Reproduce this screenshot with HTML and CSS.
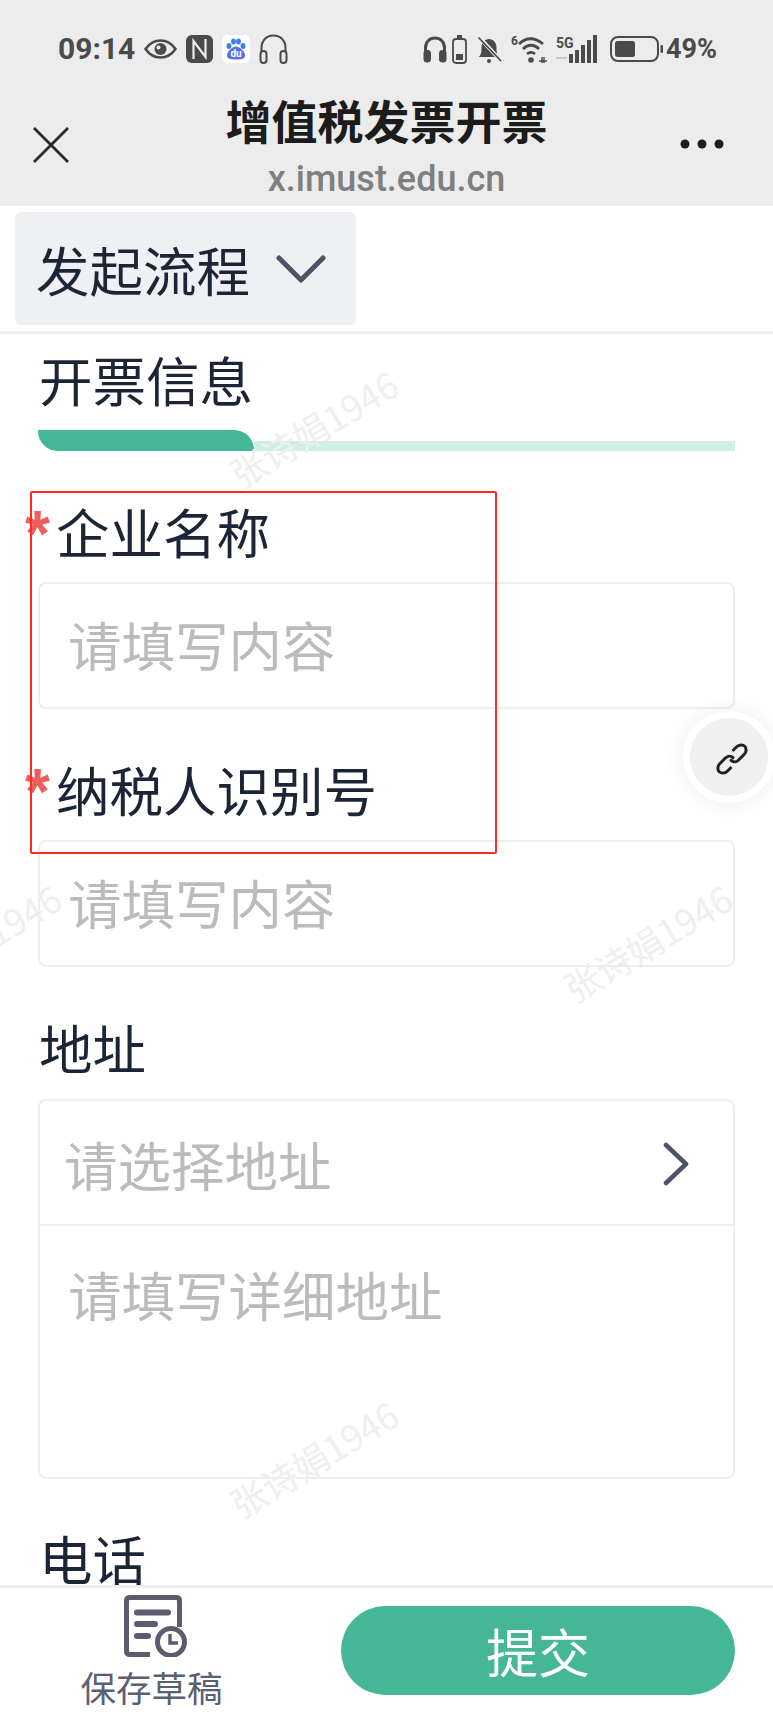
FILE: index.html
```html
<!DOCTYPE html>
<html lang="zh-CN">
<head>
<meta charset="utf-8">
<title>增值税发票开票</title>
<link rel="stylesheet" href="styles.css">
</head>
<body>
<div class="app">
  <header class="topbar">
    <div class="status">
      <div class="status-group">
        <span class="time">09:14</span>
        <svg class="i-eye" viewBox="0 0 33 20"><path d="M1.5 10C6 3.5 11 1.5 16.5 1.5S27 3.5 31.5 10C27 16.5 22 18.5 16.5 18.5S6 16.5 1.5 10Z" fill="none" stroke="#4a4a4a" stroke-width="2.6"/><circle cx="16.5" cy="10" r="6" fill="#4a4a4a"/><circle cx="14.5" cy="8.5" r="2" fill="#ececec"/></svg>
        <svg class="i-nfc" viewBox="0 0 27 28"><rect width="27" height="28" rx="6" fill="#4a4a4a"/><path d="M7.500 24V6L19.500 22V4" fill="none" stroke="#ececec" stroke-width="2.200"/></svg>
        <svg class="i-baidu" viewBox="0 0 28 28"><rect width="28" height="28" rx="5" fill="#fff"/><ellipse cx="7" cy="11" rx="2.4" ry="3" fill="#3a7df0"/><ellipse cx="11.5" cy="6.5" rx="2.4" ry="3" fill="#3a7df0"/><ellipse cx="16.5" cy="6.5" rx="2.4" ry="3" fill="#3a7df0"/><ellipse cx="21" cy="11" rx="2.4" ry="3" fill="#3a7df0"/><path d="M14 11.5C18 11.5 23 17 23 20.5S19.500 24.500 14 24.500 5 24 5 20.500 10 11.500 14 11.500Z" fill="#5b6cf0"/><text class="du" x="14" y="22" text-anchor="middle">du</text></svg>
        <svg class="i-phones" viewBox="0 0 29 30"><path d="M2.500 18V14C2.500 6.500 7.500 1.500 14.500 1.500S26.500 6.500 26.500 14V18" fill="none" stroke="#4a4a4a" stroke-width="2"/><rect x="1.500" y="17" width="6" height="12" rx="3" fill="none" stroke="#4a4a4a" stroke-width="2"/><rect x="21.500" y="17" width="6" height="12" rx="3" fill="none" stroke="#4a4a4a" stroke-width="2"/></svg>
      </div>
      <div class="status-group status-right">
        <svg class="i-phones-fill" viewBox="0 0 24 27"><path d="M2.500 17V12C2.500 6 6.500 2 12 2S21.500 6 21.500 12V17" fill="none" stroke="#4a4a4a" stroke-width="3"/><rect x="0.500" y="14" width="7.500" height="12.500" rx="3.500" fill="#4a4a4a"/><rect x="16" y="14" width="7.500" height="12.500" rx="3.500" fill="#4a4a4a"/></svg>
        <svg class="i-batt-v" viewBox="0 0 15 29"><rect x="5" y="0" width="5" height="3" fill="#4a4a4a"/><rect x="1" y="4" width="13" height="24" rx="3" fill="none" stroke="#4a4a4a" stroke-width="1.800"/><rect x="4" y="19" width="7" height="6" fill="#4a4a4a"/></svg>
        <svg class="i-bell" viewBox="0 0 25 27"><path d="M2 21C4.500 18 4.500 15 4.500 11.500 4.500 6.500 8 3 12 3S19.500 6.500 19.500 11.500C19.500 15 19.500 18 22 21Z" fill="#4a4a4a"/><circle cx="12" cy="25" r="2" fill="#4a4a4a"/><path d="M2.500 1.500L24 25" stroke="#ececec" stroke-width="4"/><path d="M1.500 1.500L24 25" stroke="#4a4a4a" stroke-width="1.800"/></svg>
        <svg class="i-wifi" viewBox="0 0 37 30"><text class="six" x="0" y="11">6</text><path d="M8 10C15 3 24 3 32 10M12 15C17 10 23 10 28 15M16 20C18.500 18 21.500 18 24 20" fill="none" stroke="#4a4a4a" stroke-width="2.800"/><circle cx="20" cy="26" r="2.800" fill="#4a4a4a"/><path d="M28 27H36M31 23V29M33 23V29" stroke="#4a4a4a" stroke-width="1.400"/></svg>
        <svg class="i-signal" viewBox="0 0 44 29"><text class="fiveg" x="0" y="13">5G</text><path d="M0 23H11" stroke="#bdbdbd" stroke-width="1.500"/><rect x="13" y="19" width="4" height="9" fill="#4a4a4a"/><rect x="19" y="15" width="4" height="13" fill="#4a4a4a"/><rect x="25" y="10" width="4" height="18" fill="#4a4a4a"/><rect x="31" y="5" width="4" height="23" fill="#4a4a4a"/><rect x="37" y="0" width="4" height="28" fill="#4a4a4a"/></svg>
        <svg class="i-batt" viewBox="0 0 53 26"><rect x="1" y="1" width="47" height="24" rx="7" fill="none" stroke="#4a4a4a" stroke-width="2"/><rect x="5" y="5" width="20" height="16" rx="2.500" fill="#4a4a4a"/><rect x="50.500" y="9" width="2.500" height="8" rx="1" fill="#4a4a4a"/></svg>
        <span class="percent">49%</span>
      </div>
    </div>
    <div class="nav">
      <svg class="i-close" viewBox="0 0 36 36"><path d="M1 1L35 35M35 1L1 35" stroke="#2a2a2a" stroke-width="2.800"/></svg>
      <div class="nav-title">
        <div class="title">增值税发票开票</div>
        <div class="url">x.imust.edu.cn</div>
      </div>
      <svg class="i-more" viewBox="0 0 44 10"><circle cx="5" cy="5" r="4.500" fill="#1c1c1c"/><circle cx="22" cy="5" r="4.500" fill="#1c1c1c"/><circle cx="39" cy="5" r="4.500" fill="#1c1c1c"/></svg>
    </div>
  </header>

  <div class="toolbar">
    <div class="flow-btn">
      <span>发起流程</span>
      <svg class="i-chev-down" viewBox="0 0 50 28"><path d="M3 3L25 25L47 3" fill="none" stroke="#4b5565" stroke-width="5" stroke-linecap="round" stroke-linejoin="round"/></svg>
    </div>
  </div>

  <main class="form">
    <h2 class="section-title">开票信息</h2>
    <div class="progress"><div class="progress-fill"></div><div class="progress-rest"></div></div>

    <div class="field field-first">
      <div class="label label-req"><span class="star">*</span>企业名称</div>
      <div class="input"><span class="placeholder">请填写内容</span></div>
    </div>
    <div class="field">
      <div class="label label-req"><span class="star">*</span>纳税人识别号</div>
      <div class="input"><span class="placeholder">请填写内容</span></div>
    </div>
    <div class="field">
      <div class="label">地址</div>
      <div class="address">
        <div class="address-row">
          <span class="placeholder">请选择地址</span>
          <svg class="i-chev-right" viewBox="0 0 26 44"><path d="M3 3L23 22L3 41" fill="none" stroke="#4b5565" stroke-width="4.500" stroke-linecap="round" stroke-linejoin="round"/></svg>
        </div>
        <div class="address-detail"><span class="placeholder">请填写详细地址</span></div>
      </div>
    </div>
    <div class="field field-phone">
      <div class="label">电话</div>
    </div>
  </main>

  <footer class="footer">
    <div class="draft">
      <svg class="i-draft" viewBox="0 0 64 62"><path d="M26 59.500H6Q2.500 59.500 2.500 56V5.500Q2.500 2.500 6 2.500H52Q55.500 2.500 55.500 5.500V32" fill="none" stroke="#5b5d6e" stroke-width="5"/><path d="M13 17.500H44M13 29H31M13 41H24" stroke="#5b5d6e" stroke-width="6" stroke-linecap="round"/><circle cx="47" cy="47" r="13.500" fill="#fff" stroke="#5b5d6e" stroke-width="5"/><path d="M46 39V48H54" fill="none" stroke="#5b5d6e" stroke-width="3.500"/></svg>
      <span class="draft-text">保存草稿</span>
    </div>
    <button class="submit">提交</button>
  </footer>

  <span class="wm wm-1">张诗娟1946</span>
  <span class="wm wm-2">张诗娟1946</span>
  <span class="wm wm-3">张诗娟1946</span>
  <span class="wm wm-4">张诗娟1946</span>

  <div class="red-box"></div>
  <div class="float-link">
    <svg class="i-link" viewBox="0 0 36 36"><path d="M19.500 8.500L23 5C25.500 2.500 29.500 2.500 31.500 4.500S33.500 10.500 31 13L25 19C22.500 21.500 19 21.500 17 19.500" fill="none" stroke="#222" stroke-width="3.200" stroke-linecap="round"/><path d="M16.500 27.500L13 31C10.500 33.500 6.500 33.500 4.500 31.500S2.500 25.500 5 23L11 17C13.500 14.500 17 14.500 19 16.500" fill="none" stroke="#222" stroke-width="3.200" stroke-linecap="round"/></svg>
  </div>
</div>
</body>
</html>
```

FILE: styles.css
```css
* { box-sizing: border-box; }
html, body { margin: 0; padding: 0; background: #fff; }
body { font-family: "Noto Sans CJK SC", "Roboto", sans-serif; color: #1c2536; }

.app { position: relative; display: flex; flex-direction: column; width: 773px; height: 1712px; overflow: hidden; background: #fff; }

/* top bar */
.topbar { flex: none; height: 206px; padding-top: 34px; background: #ececec; }
.status { display: flex; justify-content: space-between; align-items: center; height: 30px; padding: 0 56px 0 58px; }
.status-group { display: flex; align-items: center; gap: 9px; }
.status-right { gap: 5px; }
.time, .percent { font-family: "Roboto", sans-serif; font-weight: 700; color: #4a4a4a; }
.time { font-size: 30px; line-height: 30px; }
.percent { font-size: 27px; line-height: 30px; margin-left: -2px; }
.i-eye { width: 33px; height: 20px; }
.i-nfc { width: 27px; height: 28px; }
.i-baidu { width: 28px; height: 28px; }
.i-phones { width: 29px; height: 30px; }
.i-phones-fill { width: 24px; height: 27px; }
.i-batt-v { width: 15px; height: 29px; }
.i-bell { width: 25px; height: 27px; margin-left: 5px; }
.i-wifi { width: 37px; height: 30px; margin-left: 4px; }
.i-signal { width: 44px; height: 29px; margin-left: 3px; }
.i-batt { width: 53px; height: 26px; margin-left: 5px; }
.du { font: 700 10px "Roboto", sans-serif; fill: #fff; }
.six { font: 700 12px "Roboto", sans-serif; fill: #4a4a4a; }
.fiveg { font: 700 14px "Roboto", sans-serif; fill: #4a4a4a; }

.nav { display: grid; grid-template-columns: 1fr auto 1fr; align-items: start; margin-top: 30px; padding: 0 33px; }
.i-close { width: 36px; height: 36px; margin-top: 33px; }
.i-more { width: 44px; height: 10px; margin: 45px 16px 0 0; justify-self: end; }
.nav-title { text-align: center; }
.title { font-size: 46px; line-height: 50px; font-weight: 700; color: #1c1c1c; white-space: nowrap; }
.url { margin-top: 16px; font-family: "Roboto", sans-serif; font-size: 36px; line-height: 38px; font-weight: 500; color: #7f7f7f; }

/* toolbar */
.toolbar { flex: none; height: 128px; padding: 6px 0 0 15px; border-bottom: 3px solid #eeeeee; }
.flow-btn { display: flex; align-items: center; gap: 26px; width: 341px; height: 113px; padding-left: 21px; border-radius: 6px; background: #eff0f4; font-size: 53.5px; line-height: 60px; color: #1c2536; }
.i-chev-down { width: 50px; height: 28px; }

/* form */
.form { flex: 1; min-height: 0; overflow: hidden; padding: 17px 38px 0; }
.section-title { margin: 0; padding: 0 0 5px 1px; font-size: 53.5px; line-height: 55px; font-weight: 400; }
.progress { display: flex; align-items: flex-end; height: 21px; margin-top: 19px; }
.progress-fill { width: 216px; height: 21px; border-radius: 0 20px 0 20px; background: #46b796; }
.progress-rest { flex: 1; height: 10px; background: #cdf0e6; }

.field { margin-top: 52px; }
.field-phone { margin-top: 51px; }
.label { position: relative; padding: 0 0 4px 1px; font-size: 53.5px; line-height: 56px; color: #1c2536; white-space: nowrap; }
.label-req { padding-left: 18px; }
.star { position: absolute; left: -13px; top: 1px; font-family: "Liberation Sans", sans-serif; font-size: 64px; line-height: 60px; font-weight: 700; color: #ee5e5a; }
.input { display: flex; align-items: center; height: 127px; margin-top: 19px; padding: 0 0 3px 28px; border: 2px solid #eeeeee; border-radius: 8px; }
.placeholder { font-size: 53.5px; line-height: 60px; color: #bbbbbb; white-space: nowrap; }

.address { height: 380px; margin-top: 20px; border: 2px solid #eeeeee; border-radius: 8px; }
.address-row { display: flex; justify-content: space-between; align-items: center; height: 125px; padding: 2px 44px 0 24px; border-bottom: 2px solid #eeeeee; }
.i-chev-right { width: 26px; height: 44px; }
.address-detail { padding: 38px 0 0 28px; }

/* footer */
.footer { flex: none; display: flex; justify-content: space-between; height: 127px; padding: 0 38px 0 81px; border-top: 3px solid #eeeeee; background: #fff; z-index: 1; }
.draft { display: flex; flex-direction: column; align-items: center; width: 141px; padding-top: 7px; }
.i-draft { width: 64px; height: 62px; margin-left: 8px; flex: none; }
.draft-text { margin-top: 10px; font-size: 35.5px; line-height: 40px; color: #5b6070; white-space: nowrap; }
.submit { align-self: flex-start; width: 394px; height: 89px; margin-top: 18px; border: 0; border-radius: 45px; background: #46b796; color: #fff; font-family: inherit; font-size: 52px; line-height: 60px; padding: 0; }

/* overlays */
.wm { position: absolute; width: 200px; margin: -20px 0 0 -100px; text-align: center; font-family: "Noto Sans CJK SC", "Roboto", sans-serif; font-size: 36px; line-height: 40px; color: #efefef; transform: rotate(-31deg); white-space: nowrap; pointer-events: none; }
.wm-1 { left: 313px; top: 428px; }
.wm-2 { left: -24px; top: 942px; }
.wm-3 { left: 647px; top: 942px; }
.wm-4 { left: 313px; top: 1458px; }

.red-box { position: absolute; left: 30px; top: 491px; width: 467px; height: 363px; border: 2px solid #ff2a20; border-radius: 2px; pointer-events: none; }

.float-link { position: absolute; left: 683px; top: 711px; display: flex; align-items: center; justify-content: center; width: 92px; height: 92px; border: 7px solid #fff; border-radius: 50%; background: #f0f0f0; box-shadow: 0 0 22px rgba(0, 0, 0, 0.07); }
.i-link { width: 34px; height: 34px; margin: 3px 0 0 6px; }
```
